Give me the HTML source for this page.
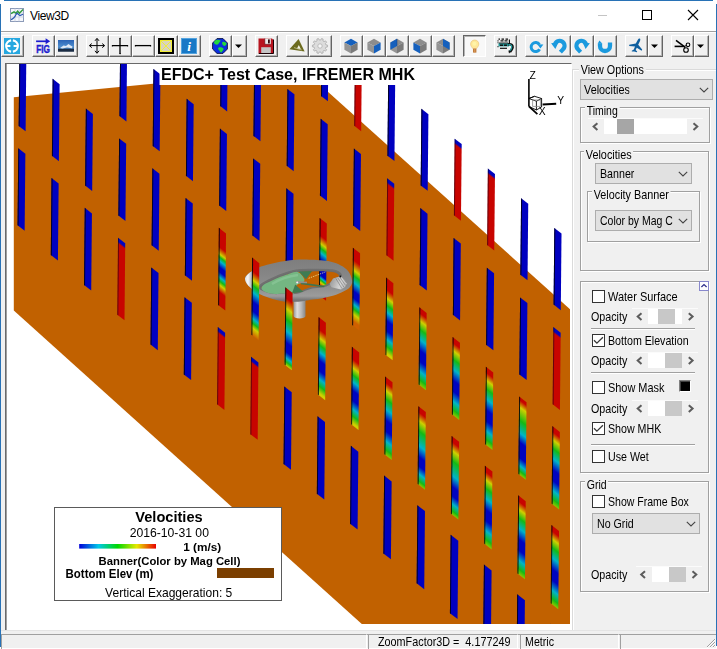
<!DOCTYPE html>
<html><head><meta charset="utf-8"><title>View3D</title>
<style>
html,body{margin:0;padding:0}
body{width:717px;height:649px;position:relative;overflow:hidden;background:#fff;font-family:"Liberation Sans",sans-serif;font-size:11px;color:#000}
.abs{position:absolute}
.face{position:absolute;left:1px;top:31px;width:715px;height:617px;background:#f0f0f0}
.tb{position:absolute;top:35px;height:20px;width:21px;border:1px solid;border-color:#fff #646464 #646464 #fff;background:#f0f0f0;box-sizing:content-box;box-shadow:inset -1px -1px 0 #b4b4b4}
.tb.dd{width:13px}
.tb svg{position:absolute;left:0;top:0}
.tb.pressed{border-color:#646464 #fff #fff #646464;background:#f8f8f8;box-shadow:inset 1px 1px 0 #b4b4b4}
.grp{position:absolute;border:1px solid #a0a0a0;box-shadow:1px 1px 0 #fff, inset 1px 1px 0 #fff;box-sizing:border-box}
.grp>span{position:absolute;top:-8px;left:6px;background:#f0f0f0;padding:0 1px;line-height:13px;white-space:nowrap}
.grp.lite{border-color:#dadada}
.lbl{position:absolute;white-space:nowrap;line-height:13px;letter-spacing:-0.15px}
.combo{position:absolute;box-sizing:border-box;border:1px solid #adadad;background:#e1e1e1;height:21px;line-height:18px;padding-left:4px;white-space:nowrap;overflow:hidden;letter-spacing:-0.15px}
.combo svg{position:absolute;right:3px;top:7px}
.cb{position:absolute;width:13px;height:13px;box-sizing:border-box;border:1px solid #333;background:#fff}
.cb svg{position:absolute;left:0;top:0}
.sep{position:absolute;height:1px;background:#a0a0a0;left:591px;width:104px;box-shadow:0 1px 0 #fff}
.t{position:absolute;white-space:nowrap;font-size:12.4px;line-height:14px;transform:scaleX(.86);filter:grayscale(1);transform-origin:0 0;color:#000}
.trk{position:absolute;background:#fff;height:15px}
.thm{position:absolute;height:15px}
.arw{position:absolute;font-size:0}
.sb{position:absolute;top:634px;height:14px;border:1px solid;border-color:#a0a0a0 #fff #fff #a0a0a0;box-sizing:content-box;line-height:14px;white-space:nowrap;padding-left:0;letter-spacing:-0.1px}
</style></head><body>
<!-- window frame -->
<div class="abs" style="left:4px;top:0;width:709px;height:1px;background:#2872b6;z-index:10"></div>
<div class="abs" style="left:0;top:4px;width:1px;height:643px;background:#2872b6;z-index:10"></div>
<div class="abs" style="left:716px;top:4px;width:1px;height:642px;background:#2872b6;z-index:10"></div>
<!-- title bar -->
<svg class="abs" style="left:10px;top:8px" width="14" height="14" viewBox="0 0 14 14">
 <rect x=".5" y=".5" width="13" height="13" fill="#f4f6fb" stroke="#8c9bb8"/>
 <path d="M.5 5H13.5M.5 9H13.5M5 .5V13.5M9 .5V13.5" stroke="#c5cde0" stroke-width=".8"/>
 <path d="M1 5.6L4 3.8L6 5.2L7.6 3.2L9.4 5.2L13 1.6" stroke="#2e9a3a" stroke-width="1.4" fill="none"/>
 <path d="M1 11.6C3.4 11 5 9 6 6.6L7 5.2L10 7.6L13 6.2" stroke="#2c58b0" stroke-width="1.2" fill="none"/>
</svg>
<div class="abs" style="left:30px;top:9px;font-size:12px;line-height:14px;letter-spacing:-0.38px">View3D</div>
<div class="abs" style="left:598px;top:15px;width:9px;height:1px;background:#c4c4c4"></div>
<div class="abs" style="left:642px;top:10px;width:8px;height:8px;border:1px solid #000"></div>
<svg class="abs" style="left:687px;top:9px" width="12" height="12" viewBox="0 0 12 12"><path d="M1 1L11 11M11 1L1 11" stroke="#000" stroke-width="1.1"/></svg>
<div class="face"></div>
<div class="abs" style="left:1px;top:31px;width:715px;height:1px;background:#a0a0a0"></div><div class="abs" style="left:1px;top:32px;width:715px;height:1px;background:#fff"></div>
<div class="tb" style="left:1px"><svg width="16" height="16" viewBox="0 0 16 16" style="left:2px;top:2px;overflow:visible"><rect width="16" height="16" fill="#27a8e0"/><path d="M7.1 2.35 A5.7 5.7 0 0 0 7.1 13.65 M8.9 2.35 A5.7 5.7 0 0 1 8.9 13.65" fill="none" stroke="#fff" stroke-width="2.1"/><path d="M2.6 8H6.4M9.6 8H13.4" stroke="#fff" stroke-width="2"/></svg></div>
<div class="tb" style="left:32px"><svg width="16" height="16" viewBox="0 0 16 16" style="left:2px;top:2px;overflow:visible"><path d="M1.1 3.3H12" stroke="#1c1ccf" stroke-width="1.7"/><path d="M15.2 3.3L10.6 .3V6.3Z" fill="#1c1ccf"/><text x="1.2" y="14.6" font-family="Liberation Sans, sans-serif" font-weight="bold" font-size="10.9" fill="#1c1ccf" stroke="#1c1ccf" stroke-width=".45" textLength="13.7" lengthAdjust="spacingAndGlyphs">FIG</text></svg></div>
<div class="tb" style="left:55px"><svg width="16" height="16" viewBox="0 0 16 16" style="left:2px;top:2px;overflow:visible"><defs><linearGradient id="sky" x1="0" y1="0" x2="0" y2="1"><stop offset="0" stop-color="#2b62b4"/><stop offset=".6" stop-color="#4f8fd0"/><stop offset="1" stop-color="#1c3048"/></linearGradient></defs><rect x="0" y="2" width="16" height="11.5" fill="url(#sky)"/><path d="M2 10 L5.5 7.4 L8 8 L10.5 6 L13 7.8 L14.5 8.6 L14 10.2 L9 9.6 L4.5 10.6Z" fill="#dfe8f4"/><rect x="0" y="11" width="16" height="2.5" fill="#1b2c44"/></svg></div>
<div class="tb" style="left:86px"><svg width="16" height="16" viewBox="0 0 16 16" style="left:2px;top:2px;overflow:visible"><path d="M8 1V15M1 7.6H15" stroke="#000" stroke-width="1"/><path d="M8 .3L6 2.8M8 .3L10 2.8M8 15.3L6 12.8M8 15.3L10 12.8M.3 7.6L2.8 5.6M.3 7.6L2.8 9.6M15.7 7.6L13.2 5.6M15.7 7.6L13.2 9.6" stroke="#000" stroke-width="1" fill="none"/></svg></div>
<div class="tb" style="left:109px"><svg width="16" height="16" viewBox="0 0 16 16" style="left:2px;top:2px;overflow:visible"><path d="M8 0V16M0 7.6H16" stroke="#000" stroke-width="1.3"/><path d="M7.4 .3H9M7.4 15.7H9M.3 7V8.6M15.7 7V8.6" stroke="#000" stroke-width=".7"/></svg></div>
<div class="tb" style="left:132px"><svg width="16" height="16" viewBox="0 0 16 16" style="left:2px;top:2px;overflow:visible"><path d="M0 7.6H16" stroke="#000" stroke-width="1.3"/><path d="M.3 7V8.6M15.7 7V8.6" stroke="#000" stroke-width=".7"/></svg></div>
<div class="tb" style="left:155px"><svg width="16" height="16" viewBox="0 0 16 16" style="left:2px;top:2px;overflow:visible"><rect x="1" y="1" width="14" height="14" fill="#d9d5bc" stroke="#000" stroke-width="2"/><rect x="2.5" y="2.5" width="11" height="11" fill="none" stroke="#f0ec38" stroke-width="1"/><path d="M3 3L13 13M13 3L3 13" stroke="#f0ec38" stroke-width="1"/></svg></div>
<div class="tb" style="left:178px"><svg width="16" height="16" viewBox="0 0 16 16" style="left:2px;top:2px;overflow:visible"><rect width="16" height="16" fill="#1878c6"/><rect x=".5" y=".5" width="15" height="15" fill="none" stroke="#7cc0ee" stroke-width="1" opacity=".6"/><text x="8.2" y="13" text-anchor="middle" font-family="Liberation Serif, serif" font-style="italic" font-weight="bold" font-size="13.5" fill="#fff">i</text></svg></div>
<div class="tb" style="left:209px"><svg width="16" height="16" viewBox="0 0 16 16" style="left:2px;top:2px;overflow:visible"><path d="M5 .6H11L15.4 5V11L11 15.4H5L.6 11V5Z" fill="#0a2ee0" stroke="#0a1040" stroke-width=".9"/><path d="M2.4 3.2 C4 1.6 7 1.4 8.6 2.6 C8.4 4.2 6.8 4.4 6.4 6 C5.2 7.4 3 6.6 2 5Z" fill="#22d83c"/><path d="M10.2 4.2 C11.6 3.2 13.6 4 14.6 5.6 C14.4 7.4 12.8 8.4 11.4 7.6 C10.4 6.8 9.8 5.4 10.2 4.2Z" fill="#22d83c"/><path d="M6.4 9.8 C8 8.8 10.6 9.4 11.6 10.8 C11.4 12.6 10.2 13.2 9.6 14.6 C8.4 14.8 7.8 13 7 12 C6.2 11.4 5.8 10.6 6.4 9.8Z" fill="#22d83c"/></svg></div>
<div class="tb dd" style="left:232px"><svg width="13" height="20" viewBox="0 0 13 20" style="left:0;top:0"><path d="M2 8.5H9L5.5 12Z" fill="#000"/></svg></div>
<div class="tb" style="left:255px"><svg width="16" height="16" viewBox="0 0 16 16" style="left:2px;top:2px;overflow:visible"><path d="M.5 .5H14L15.5 2V15.5H.5Z" fill="#b8141f"/><rect x="3.2" y="9.2" width="9.6" height="6.3" fill="#c4c4c4"/><rect x="6.8" y=".5" width="6" height="5.8" fill="#ececec"/><rect x="10" y="1.4" width="1.8" height="4" fill="#30080c"/><path d="M15.5 1.5V15.5H.8" fill="none" stroke="#1a0004" stroke-width="1"/><path d="M6.8 .5V6.3H12.8" fill="none" stroke="#5a0a10" stroke-width=".6"/></svg></div>
<div class="tb" style="left:286px"><svg width="16" height="16" viewBox="0 0 16 16" style="left:2px;top:2px;overflow:visible"><path d="M9.6 1 L15.6 13.6 L.4 11.2Z" fill="#6c6b1e"/><path d="M9.8 7 L11.8 11 L8 10.4Z" fill="#f4f4e8"/><path d="M5 9.6L12.8 12" stroke="#e0e0c0" stroke-width=".6"/></svg></div>
<div class="tb" style="left:309px"><svg width="16" height="16" viewBox="0 0 16 16" style="left:2px;top:2px;overflow:visible"><path d="M15.55 7.17L15.55 8.83L13.88 9.19L13.45 10.50L14.60 11.77L13.62 13.12L12.06 12.42L10.94 13.23L11.13 14.93L9.54 15.44L8.68 13.96L7.31 13.96L6.46 15.44L4.87 14.93L5.05 13.22L3.94 12.41L2.38 13.12L1.40 11.77L2.54 10.49L2.12 9.18L0.45 8.83L0.45 7.17L2.12 6.81L2.55 5.50L1.40 4.23L2.38 2.88L3.94 3.58L5.06 2.77L4.87 1.07L6.46 0.56L7.32 2.04L8.69 2.04L9.54 0.56L11.13 1.07L10.95 2.78L12.06 3.59L13.62 2.88L14.60 4.23L13.46 5.51L13.88 6.82Z" fill="#dcdcdc" stroke="#a8a8a8" stroke-width=".8"/><circle cx="8" cy="8" r="2.2" fill="#f6f6f6" stroke="#b0b0b0" stroke-width=".8"/></svg></div>
<div class="tb" style="left:340px"><svg width="16" height="16" viewBox="0 0 16 16" style="left:2px;top:2px;overflow:visible"><path d="M8 .8 L14.6 4.4 L8 8 L1.4 4.4Z" fill="#1560bd"/><path d="M1.4 4.4 L8 8 V15.4 L1.4 11.8Z" fill="#949494"/><path d="M14.6 4.4 L8 8 V15.4 L14.6 11.8Z" fill="#7a7a7a"/></svg></div>
<div class="tb" style="left:363px"><svg width="16" height="16" viewBox="0 0 16 16" style="left:2px;top:2px;overflow:visible"><path d="M8 .8 L14.6 4.4 L8 8 L1.4 4.4Z" fill="#8c8c8c"/><path d="M1.4 4.4 L8 8 V15.4 L1.4 11.8Z" fill="#949494"/><path d="M14.6 4.4 L8 8 V15.4 L14.6 11.8Z" fill="#1560bd"/></svg></div>
<div class="tb" style="left:386px"><svg width="16" height="16" viewBox="0 0 16 16" style="left:2px;top:2px;overflow:visible"><path d="M8 .8 L14.6 4.4 L8 8 L1.4 4.4Z" fill="#8c8c8c"/><path d="M1.4 4.4 L8 8 V15.4 L1.4 11.8Z" fill="#949494"/><path d="M14.6 4.4 L8 8 V15.4 L14.6 11.8Z" fill="#7a7a7a"/><path d="M8 .8 L1.4 4.4 V11.8 L8 8Z" fill="#1560bd"/><path d="M8 .8V8" stroke="#0d3f86" stroke-width=".5"/></svg></div>
<div class="tb" style="left:409px"><svg width="16" height="16" viewBox="0 0 16 16" style="left:2px;top:2px;overflow:visible"><path d="M8 .8 L14.6 4.4 L8 8 L1.4 4.4Z" fill="#8c8c8c"/><path d="M1.4 4.4 L8 8 V15.4 L1.4 11.8Z" fill="#1560bd"/><path d="M14.6 4.4 L8 8 V15.4 L14.6 11.8Z" fill="#7a7a7a"/></svg></div>
<div class="tb" style="left:432px"><svg width="16" height="16" viewBox="0 0 16 16" style="left:2px;top:2px;overflow:visible"><path d="M8 .8 L14.6 4.4 L8 8 L1.4 4.4Z" fill="#8c8c8c"/><path d="M1.4 4.4 L8 8 V15.4 L1.4 11.8Z" fill="#949494"/><path d="M14.6 4.4 L8 8 V15.4 L14.6 11.8Z" fill="#7a7a7a"/><path d="M8 .8 L14.6 4.4 V11.8 L8 8Z" fill="#1560bd"/></svg></div>
<div class="tb pressed" style="left:463px"><svg width="16" height="16" viewBox="0 0 16 16" style="left:2px;top:2px;overflow:visible"><path d="M8.7 2 C11.2 2 12.8 3.9 12.8 6.1 C12.8 8 11.4 9.2 10.6 10.6 H6.8 C6 9.2 4.6 8 4.6 6.1 C4.6 3.9 6.2 2 8.7 2Z" fill="#ffe898" stroke="#e8c070" stroke-width=".6"/><circle cx="8.4" cy="5.8" r="2" fill="#fff4a8"/><rect x="7" y="10.6" width="3.4" height="4" fill="#c07c3c"/><path d="M8.7 10.6V14.6" stroke="#e0a060" stroke-width=".8"/></svg></div>
<div class="tb" style="left:494px"><svg width="16" height="16" viewBox="0 0 16 16" style="left:2px;top:2px;overflow:visible"><path d="M1.5 1.1H3M4.5 1.1H7M8.5 1.1H11M.5 2.9H1.5M3.5 2.9H6.5M7.5 2.9H10.5M.5 4.8H1.5M.5 8.6H1.5" stroke="#111" stroke-width="1.1"/><rect x="1.5" y="5.2" width="10.5" height="3.2" fill="#1f9494"/><path d="M3 7.2H6M7 7.2H10" stroke="#111" stroke-width="1.5"/><path d="M2 5H11" stroke="#111" stroke-width=".9"/><path d="M3 10.3H10" stroke="#111" stroke-width="1.2"/><path d="M12.4 1.4V6" stroke="#111" stroke-width="1.2"/><path d="M11 6.4 C14.5 5.6 16 7.6 15.4 10 C15 11.6 14 12.8 13 14" fill="none" stroke="#111" stroke-width="2.6"/><path d="M11.4 6.6 C14.2 6.2 15.2 7.8 14.6 9.8 C14.2 11.2 13.6 12 12.8 13" fill="none" stroke="#27a6a6" stroke-width="1.2"/><path d="M11.4 12.4 L14.4 13 L12 15.6Z" fill="#111"/></svg></div>
<div class="tb" style="left:525px"><svg width="16" height="16" viewBox="0 0 16 16" style="left:2px;top:2px;overflow:visible"><path d="M11.4 6.6 A4.5 4.5 0 1 0 11.6 11.2" fill="none" stroke="#1b9ade" stroke-width="3"/><path d="M9.4 6.2 L15.4 6.4 L12.4 10.6Z" fill="#1b9ade"/></svg></div>
<div class="tb" style="left:548px"><svg width="16" height="16" viewBox="0 0 16 16" style="left:2px;top:2px;overflow:visible"><path d="M3.8 7.2 A4.9 4.9 0 1 1 11.9 11.4 L9.4 14.2" fill="none" stroke="#1b9ade" stroke-width="4.1"/><path d="M.1 5.2 L7.4 4.2 L4.4 11Z" fill="#1b9ade"/></svg></div>
<div class="tb" style="left:571px"><svg width="16" height="16" viewBox="0 0 16 16" style="left:2px;top:2px;overflow:visible"><path d="M12.2 7.2 A4.9 4.9 0 1 0 4.1 11.4 L6.6 14.2" fill="none" stroke="#1b9ade" stroke-width="4.1"/><path d="M15.9 5.2 L8.6 4.2 L11.6 11Z" fill="#1b9ade"/></svg></div>
<div class="tb" style="left:594px"><svg width="16" height="16" viewBox="0 0 16 16" style="left:2px;top:2px;overflow:visible"><path d="M3 5.2 V8 A5 5 0 0 0 13 8 V4.6" fill="none" stroke="#1b9ade" stroke-width="4.3"/><path d="M.8 5.4 L2.4 2.6 L5.2 5.4Z" fill="#1b9ade"/></svg></div>
<div class="tb" style="left:625px"><svg width="16" height="16" viewBox="0 0 16 16" style="left:2px;top:2px;overflow:visible"><path d="M11.6 .6 C12.6 .8 12.4 2 12 3 L10.2 6.8 L14.2 11.6 L13.6 12.8 L8.8 9.8 L7.6 12 L9.2 13.4 L8.8 14.2 L6.2 13.4 L3.8 13.6 L3.8 12.8 L5.8 11.6 L7 8.4 L1.2 8 L1.2 6.8 L7.8 5.6 L10 1.6 C10.4 .9 10.9 .5 11.6 .6Z" fill="#0f5f9f"/></svg></div>
<div class="tb dd" style="left:648px"><svg width="13" height="20" viewBox="0 0 13 20" style="left:0;top:0"><path d="M2 8.5H9L5.5 12Z" fill="#000"/></svg></div>
<div class="tb" style="left:671px"><svg width="16" height="16" viewBox="0 0 16 16" style="left:2px;top:2px;overflow:visible"><path d="M2 2.4 L10 8.4" stroke="#000" stroke-width="1.5"/><path d="M.6 8.4 H10" stroke="#000" stroke-width="1.6"/><path d="M10 8.4 L12.6 7.4 M10 8.4 L11 10" stroke="#000" stroke-width="1.1"/><circle cx="14" cy="6.8" r="1.8" fill="none" stroke="#000" stroke-width="1.1"/><circle cx="12" cy="12" r="2.3" fill="none" stroke="#000" stroke-width="1.1"/></svg></div>
<div class="tb dd" style="left:694px"><svg width="13" height="20" viewBox="0 0 13 20" style="left:0;top:0"><path d="M2 8.5H9L5.5 12Z" fill="#000"/></svg></div>
<div class="abs" style="left:5px;top:63px;width:565px;height:566px;background:#fff;border-top:1px solid #696969;border-left:1px solid #696969;border-right:1px solid #fff;border-bottom:1px solid #fff;box-sizing:content-box"></div>
<div class="abs" style="left:6px;top:64px;width:1px;height:566px;background:#a0a0a0"></div>
<svg width="717" height="649" viewBox="0 0 717 649" style="position:absolute;left:0;top:0">
<defs><linearGradient id="std" x1="0" y1="0" x2="0" y2="1"><stop offset="0" stop-color="#c80400"/><stop offset="0.07" stop-color="#c80400"/><stop offset="0.17" stop-color="#cfd000"/><stop offset="0.28" stop-color="#14ba14"/><stop offset="0.41" stop-color="#00b4c8"/><stop offset="0.55" stop-color="#0004c0"/><stop offset="0.69" stop-color="#0004c0"/><stop offset="0.82" stop-color="#00b4c8"/><stop offset="0.93" stop-color="#14ba14"/><stop offset="1" stop-color="#8cc800"/></linearGradient><linearGradient id="std2" x1="0" y1="0" x2="0" y2="1"><stop offset="0" stop-color="#c80400"/><stop offset="0.15" stop-color="#c80400"/><stop offset="0.26" stop-color="#cfd000"/><stop offset="0.35" stop-color="#14ba14"/><stop offset="0.44" stop-color="#00b4c8"/><stop offset="0.55" stop-color="#0004c0"/><stop offset="0.68" stop-color="#0004c0"/><stop offset="0.79" stop-color="#00b4c8"/><stop offset="0.88" stop-color="#14ba14"/><stop offset="0.97" stop-color="#cfd000"/><stop offset="1" stop-color="#cfd000"/></linearGradient><linearGradient id="g60" x1="0" y1="0" x2="0" y2="1"><stop offset="0" stop-color="#c80400"/><stop offset="0.24" stop-color="#c80400"/><stop offset="0.33" stop-color="#cfd000"/><stop offset="0.37" stop-color="#14ba14"/><stop offset="0.42" stop-color="#00b4c8"/><stop offset="0.5" stop-color="#0004c0"/><stop offset="0.56" stop-color="#0004c0"/><stop offset="0.63" stop-color="#00b4c8"/><stop offset="0.68" stop-color="#14ba14"/><stop offset="0.73" stop-color="#cfd000"/><stop offset="0.82" stop-color="#c80400"/><stop offset="1" stop-color="#c80400"/></linearGradient><linearGradient id="g70" x1="0" y1="0" x2="0" y2="1"><stop offset="0" stop-color="#c80400"/><stop offset="0.17" stop-color="#c80400"/><stop offset="0.28" stop-color="#cfd000"/><stop offset="0.35" stop-color="#14ba14"/><stop offset="0.44" stop-color="#00b4c8"/><stop offset="0.56" stop-color="#0004c0"/><stop offset="0.68" stop-color="#0004c0"/><stop offset="0.78" stop-color="#00b4c8"/><stop offset="0.84" stop-color="#14ba14"/><stop offset="0.9" stop-color="#cfd000"/><stop offset="1" stop-color="#d06000"/></linearGradient><linearGradient id="g80" x1="0" y1="0" x2="0" y2="1"><stop offset="0" stop-color="#c80400"/><stop offset="0.13" stop-color="#c80400"/><stop offset="0.26" stop-color="#cfd000"/><stop offset="0.4" stop-color="#14ba14"/><stop offset="0.55" stop-color="#00b4c8"/><stop offset="0.7" stop-color="#0004c0"/><stop offset="0.82" stop-color="#0004c0"/><stop offset="0.9" stop-color="#00b4c8"/><stop offset="0.95" stop-color="#14ba14"/><stop offset="1" stop-color="#cfd000"/></linearGradient><linearGradient id="g9m" x1="0" y1="0" x2="0" y2="1"><stop offset="0" stop-color="#c80400"/><stop offset="0.22" stop-color="#c80400"/><stop offset="0.32" stop-color="#cfd000"/><stop offset="0.38" stop-color="#14ba14"/><stop offset="0.44" stop-color="#00b4c8"/><stop offset="0.53" stop-color="#0004c0"/><stop offset="0.73" stop-color="#0004c0"/><stop offset="0.765" stop-color="#00b4c8"/><stop offset="0.79" stop-color="#14ba14"/><stop offset="0.82" stop-color="#cfd000"/><stop offset="0.85" stop-color="#d06000"/><stop offset="0.88" stop-color="#c80400"/><stop offset="1" stop-color="#c80400"/></linearGradient><linearGradient id="g10m" x1="0" y1="0" x2="0" y2="1"><stop offset="0" stop-color="#c80400"/><stop offset="0.15" stop-color="#c80400"/><stop offset="0.28" stop-color="#cfd000"/><stop offset="0.35" stop-color="#14ba14"/><stop offset="0.44" stop-color="#00b4c8"/><stop offset="0.55" stop-color="#0004c0"/><stop offset="0.64" stop-color="#0004c0"/><stop offset="0.72" stop-color="#00b4c8"/><stop offset="0.78" stop-color="#14ba14"/><stop offset="0.85" stop-color="#cfd000"/><stop offset="0.94" stop-color="#d06000"/><stop offset="1" stop-color="#d06000"/></linearGradient><linearGradient id="g15m" x1="0" y1="0" x2="0" y2="1"><stop offset="0" stop-color="#c80400"/><stop offset="0.04" stop-color="#c80400"/><stop offset="0.13" stop-color="#cfd000"/><stop offset="0.3" stop-color="#14ba14"/><stop offset="0.46" stop-color="#00b4c8"/><stop offset="0.58" stop-color="#0004c0"/><stop offset="0.78" stop-color="#0004c0"/><stop offset="0.88" stop-color="#00b4c8"/><stop offset="0.95" stop-color="#14ba14"/><stop offset="1" stop-color="#8cc800"/></linearGradient><linearGradient id="g12z" x1="0" y1="0" x2="0" y2="1"><stop offset="0" stop-color="#c80400"/><stop offset="0.07" stop-color="#c80400"/><stop offset="0.18" stop-color="#cfd000"/><stop offset="0.31" stop-color="#14ba14"/><stop offset="0.5" stop-color="#00b4c8"/><stop offset="0.64" stop-color="#0004c0"/><stop offset="0.76" stop-color="#0004c0"/><stop offset="0.86" stop-color="#00b4c8"/><stop offset="0.95" stop-color="#14ba14"/><stop offset="1" stop-color="#8cc800"/></linearGradient><linearGradient id="red" x1="0" y1="0" x2="0" y2="1"><stop offset="0" stop-color="#0004c0"/><stop offset="0.045" stop-color="#0004c0"/><stop offset="0.075" stop-color="#c80400"/><stop offset="1" stop-color="#c80400"/></linearGradient><clipPath id="vp"><rect x="7" y="64" width="563" height="560"/></clipPath></defs>
<g clip-path="url(#vp)">
<path d="M13.8 97.3 L302.8 69.3 L574 312.8 L574 624 L361.8 624 L13.8 310.5 Z" fill="#c16100"/>
<g transform="matrix(1 0.7757 -0.00950 1 286.39 188.18)"><rect width="7.12" height="77.07" fill="#0000c0"/><rect width="1" height="77.07" fill="#000018" opacity="0.92"/></g><g transform="matrix(1 0.7762 -0.00950 1 319.64 217.96)"><rect width="7.17" height="77.11" fill="url(#g9m)"/><rect width="1" height="77.11" fill="#080808" opacity="0.92"/></g>
<g><defs>
  <linearGradient id="ringg" gradientUnits="userSpaceOnUse" x1="0" y1="259" x2="0" y2="302"><stop offset="0" stop-color="#7e7e7e"/><stop offset=".3" stop-color="#848484"/><stop offset=".65" stop-color="#8e8e8e"/><stop offset=".86" stop-color="#9c9c9c"/><stop offset=".95" stop-color="#787878"/><stop offset="1" stop-color="#707070"/></linearGradient>
  <linearGradient id="cylg" x1="0" y1="0" x2="1" y2="0"><stop offset="0" stop-color="#969696"/><stop offset=".3" stop-color="#dedede"/><stop offset=".65" stop-color="#b8b8b8"/><stop offset="1" stop-color="#868686"/></linearGradient>
  <linearGradient id="hl" gradientUnits="userSpaceOnUse" x1="245" y1="0" x2="255" y2="0"><stop offset="0" stop-color="#dcdcdc"/><stop offset=".3" stop-color="#f8f8f8"/><stop offset=".65" stop-color="#b4b4b4"/><stop offset="1" stop-color="#888888"/></linearGradient>
  <linearGradient id="rp" gradientUnits="userSpaceOnUse" x1="331" y1="280" x2="347" y2="286"><stop offset="0" stop-color="#9c9c9c"/><stop offset=".6" stop-color="#d4d4d4"/><stop offset="1" stop-color="#b4b4b4"/></linearGradient>
 </defs><path d="M293.6 297 L293.6 316 A5.95 2.4 0 0 0 305.5 316 L305.5 297 Z" fill="url(#cylg)"/><path fill-rule="evenodd" fill="url(#ringg)" d="M245.0 278.3C244.8 276.5 246.0 276.1 247.0 275.0C248.0 273.9 248.6 273.4 250.9 272.0C253.2 270.6 257.2 268.1 261.0 266.6C264.8 265.1 269.2 264.2 273.5 263.2C277.8 262.2 282.5 261.3 286.9 260.7C291.3 260.1 294.3 259.6 300.0 259.5C305.7 259.4 315.5 259.8 321.1 260.3C326.7 260.8 330.1 261.3 333.7 262.4C337.3 263.4 340.2 264.8 342.9 266.6C345.5 268.4 348.1 270.7 349.6 273.2C351.1 275.7 352.1 279.2 352.1 281.6C352.1 284.0 351.1 285.8 349.6 287.5C348.1 289.2 345.5 290.4 342.9 291.7C340.2 293.0 336.9 294.4 333.7 295.4C330.5 296.4 327.1 297.2 323.6 297.9C320.1 298.6 315.9 299.1 312.7 299.6C309.5 300.1 307.2 300.5 304.4 300.9C301.6 301.2 299.2 301.6 296.0 301.7C292.8 301.8 288.9 302.1 285.2 301.7C281.4 301.3 277.7 300.4 273.5 299.2C269.3 297.9 264.2 296.4 260.0 294.2C255.8 292.0 250.9 288.4 248.4 285.8C245.9 283.2 245.2 280.1 245.0 278.3Z M259.2 287.5C258.4 286.2 260.6 285.1 262.0 284.0C263.4 282.9 264.6 282.3 267.6 280.8C270.6 279.3 275.5 276.6 280.2 274.9C284.9 273.1 290.6 271.2 296.0 270.3C301.4 269.4 307.1 269.6 312.7 269.5C318.3 269.4 325.3 269.5 329.5 269.9C333.7 270.2 335.9 270.6 337.8 271.6C339.8 272.7 341.8 274.9 341.2 276.2C340.6 277.5 335.9 278.2 334.0 279.5C332.1 280.8 331.5 282.8 329.5 284.0C327.5 285.2 324.9 286.2 322.0 286.8C319.1 287.4 315.0 287.0 312.0 287.6C309.0 288.2 306.5 289.6 304.0 290.5C301.5 291.4 299.7 292.5 297.0 293.0C294.3 293.5 290.5 293.3 288.0 293.3C285.5 293.3 283.9 292.8 281.8 292.8C279.7 292.8 277.6 293.5 275.1 293.3C272.6 293.1 269.5 292.7 266.8 291.7C264.1 290.7 260.0 288.8 259.2 287.5Z"/><path fill-rule="evenodd" fill="#6c6c6c" d="M259.2 287.5C258.4 286.2 260.6 285.1 262.0 284.0C263.4 282.9 264.6 282.3 267.6 280.8C270.6 279.3 275.5 276.6 280.2 274.9C284.9 273.1 290.6 271.2 296.0 270.3C301.4 269.4 307.1 269.6 312.7 269.5C318.3 269.4 325.3 269.5 329.5 269.9C333.7 270.2 335.9 270.6 337.8 271.6C339.8 272.7 341.8 274.9 341.2 276.2C340.6 277.5 335.9 278.2 334.0 279.5C332.1 280.8 331.5 282.8 329.5 284.0C327.5 285.2 324.9 286.2 322.0 286.8C319.1 287.4 315.0 287.0 312.0 287.6C309.0 288.2 306.5 289.6 304.0 290.5C301.5 291.4 299.7 292.5 297.0 293.0C294.3 293.5 290.5 293.3 288.0 293.3C285.5 293.3 283.9 292.8 281.8 292.8C279.7 292.8 277.6 293.5 275.1 293.3C272.6 293.1 269.5 292.7 266.8 291.7C264.1 290.7 260.0 288.8 259.2 287.5Z M261.5 288.0C261.1 287.0 263.2 286.4 264.5 285.5C265.8 284.6 266.8 283.9 269.5 282.5C272.2 281.1 276.6 278.7 281.0 277.0C285.4 275.3 290.7 273.2 296.0 272.3C301.3 271.4 307.1 271.5 312.7 271.4C318.3 271.3 325.5 271.5 329.5 271.8C333.5 272.1 334.9 272.4 336.5 273.2C338.1 274.0 339.4 275.6 339.0 276.6C338.6 277.7 335.6 278.3 334.0 279.5C332.4 280.7 331.5 282.8 329.5 284.0C327.5 285.2 324.9 286.2 322.0 286.8C319.1 287.4 315.0 287.0 312.0 287.6C309.0 288.2 306.5 289.6 304.0 290.5C301.5 291.4 299.7 292.5 297.0 293.0C294.3 293.5 290.5 293.3 288.0 293.3C285.5 293.3 283.9 292.8 281.8 292.8C279.7 292.8 277.6 293.5 275.1 293.3C272.6 293.1 269.1 292.6 266.8 291.7C264.5 290.8 261.9 289.0 261.5 288.0Z"/><path d="M259.2 287.5C258.4 286.2 260.6 285.1 262.0 284.0C263.4 282.9 264.6 282.3 267.6 280.8C270.6 279.3 275.5 276.6 280.2 274.9C284.9 273.1 290.6 271.2 296.0 270.3C301.4 269.4 307.1 269.6 312.7 269.5C318.3 269.4 325.3 269.5 329.5 269.9C333.7 270.2 335.9 270.6 337.8 271.6C339.8 272.7 341.8 274.9 341.2 276.2C340.6 277.5 335.9 278.2 334.0 279.5C332.1 280.8 331.5 282.8 329.5 284.0C327.5 285.2 324.9 286.2 322.0 286.8C319.1 287.4 315.0 287.0 312.0 287.6C309.0 288.2 306.5 289.6 304.0 290.5C301.5 291.4 299.7 292.5 297.0 293.0C294.3 293.5 290.5 293.3 288.0 293.3C285.5 293.3 283.9 292.8 281.8 292.8C279.7 292.8 277.6 293.5 275.1 293.3C272.6 293.1 269.5 292.7 266.8 291.7C264.1 290.7 260.0 288.8 259.2 287.5Z" fill="none" stroke="#707070" stroke-width="1.6"/><path d="M245 278.3 C246.5 275 249 273 252 271.3 L257 268.6 C255.5 276 255.5 284 258.5 293 C254 290.5 250.5 288 248.4 285.8 C246 283 244.8 280.5 245 278.3Z" fill="url(#hl)"/><path d="M262.4 288.3C262.2 287.1 263.8 285.8 265.6 284.6C267.4 283.4 269.5 282.5 273.0 281.0C276.5 279.5 282.4 277.0 286.5 275.6C290.6 274.2 294.7 272.0 297.5 272.8C300.3 273.6 303.8 278.6 303.5 280.5C303.2 282.4 297.8 282.4 296.0 284.5C294.2 286.6 294.3 291.4 293.0 292.8C291.7 294.2 289.9 293.2 288.0 293.2C286.1 293.2 283.9 292.6 281.8 292.6C279.7 292.6 277.6 293.4 275.1 293.2C272.6 293.0 268.9 292.4 266.8 291.6C264.7 290.8 262.6 289.5 262.4 288.3Z" fill="#74b682" stroke="#74b682" stroke-width="1.8" stroke-linejoin="round"/><path d="M272 284 C280 279 290 276 298 275" stroke="#8cc898" stroke-width="2.5" fill="none" opacity=".7"/><path d="M298.8 271.4 L312 270.9 L306 279.2 Z" fill="#3e7c54"/><path d="M295.2 284.4 L303.2 291.8 L292 293.2 Z" fill="#3e7c54"/><path d="M301 282.6 L324.5 285.8 L324.2 287.2 L301 284.2 Z" fill="#3f7450"/><path d="M296 281 L307 281.8 L307 283.2 L296 283 Z" fill="#909090"/><circle cx="297.2" cy="282.6" r="1" fill="#f4f4f4"/><path d="M308.6 278.3 L325.3 272" stroke="#e8e4a0" stroke-width=".8" stroke-dasharray="1.4 1"/><path d="M333 278.6 L341.2 276 L347.2 283 L345 287 L341 289.6 L331.5 287.2 L329.5 284 Z" fill="url(#rp)"/><path d="M341.6 276.6 L346.8 283 M339.8 277.2 L345.6 285.4 M337.8 277.8 L344 287.2 M335.8 278.4 L342 288.6" stroke="#6c6c6c" stroke-width=".7" opacity=".75"/><circle cx="340.4" cy="276.6" r="1" fill="#111"/></g>
<g transform="matrix(1 0.7729 -0.00950 1 321.74 19.33)"><rect width="6.89" height="76.68" fill="#0000c0"/><rect width="1" height="76.68" fill="#000018" opacity="0.92"/></g><g transform="matrix(1 0.7731 -0.00950 1 221.00 29.19)"><rect width="6.90" height="76.93" fill="#0000c0"/><rect width="1" height="76.93" fill="#000018" opacity="0.92"/></g><g transform="matrix(1 0.7733 -0.00950 1 120.23 39.04)"><rect width="6.91" height="77.04" fill="#0000c0"/><rect width="1" height="77.04" fill="#000018" opacity="0.92"/></g><g transform="matrix(1 0.7734 -0.00950 1 19.42 48.89)"><rect width="6.93" height="77.01" fill="#0000c0"/><rect width="1" height="77.01" fill="#000018" opacity="0.92"/></g><g transform="matrix(1 0.7734 -0.00950 1 354.96 49.18)"><rect width="6.93" height="76.64" fill="url(#red)"/><rect width="1" height="76.64" fill="#000018" opacity="0.5"/></g><g transform="matrix(1 0.7736 -0.00950 1 254.23 59.04)"><rect width="6.94" height="76.90" fill="#0000c0"/><rect width="1" height="76.90" fill="#000018" opacity="0.92"/></g><g transform="matrix(1 0.7738 -0.00950 1 153.46 68.90)"><rect width="6.96" height="77.02" fill="#0000c0"/><rect width="1" height="77.02" fill="#000018" opacity="0.92"/></g><g transform="matrix(1 0.7739 -0.00950 1 52.65 78.74)"><rect width="6.97" height="77.01" fill="#0000c0"/><rect width="1" height="77.01" fill="#000018" opacity="0.92"/></g><g transform="matrix(1 0.7739 -0.00950 1 388.19 79.02)"><rect width="6.97" height="76.61" fill="#0000c0"/><rect width="1" height="76.61" fill="#000018" opacity="0.92"/></g><g transform="matrix(1 0.7741 -0.00950 1 287.45 88.88)"><rect width="6.98" height="76.88" fill="#0000c0"/><rect width="1" height="76.88" fill="#000018" opacity="0.92"/></g><g transform="matrix(1 0.7743 -0.00950 1 186.69 98.74)"><rect width="7.00" height="77.02" fill="#0000c0"/><rect width="1" height="77.02" fill="#000018" opacity="0.92"/></g><g transform="matrix(1 0.7744 -0.00950 1 85.89 108.59)"><rect width="7.01" height="77.02" fill="#0000c0"/><rect width="1" height="77.02" fill="#000018" opacity="0.92"/></g><g transform="matrix(1 0.7744 -0.00950 1 421.41 108.84)"><rect width="7.01" height="76.59" fill="#0000c0"/><rect width="1" height="76.59" fill="#000018" opacity="0.92"/></g><g transform="matrix(1 0.7746 -0.00950 1 320.68 118.71)"><rect width="7.03" height="76.87" fill="#0000c0"/><rect width="1" height="76.87" fill="#000018" opacity="0.92"/></g><g transform="matrix(1 0.7748 -0.00950 1 219.92 128.56)"><rect width="7.04" height="77.02" fill="#0000c0"/><rect width="1" height="77.02" fill="#000018" opacity="0.92"/></g><g transform="matrix(1 0.7749 -0.00950 1 119.13 138.41)"><rect width="7.05" height="77.04" fill="#0000c0"/><rect width="1" height="77.04" fill="#000018" opacity="0.92"/></g><g transform="matrix(1 0.7749 -0.00950 1 454.64 138.65)"><rect width="7.05" height="76.58" fill="url(#red)"/><rect width="1" height="76.58" fill="#000018" opacity="0.5"/></g><g transform="matrix(1 0.7751 -0.00950 1 18.30 148.26)"><rect width="7.07" height="76.91" fill="#0000c0"/><rect width="1" height="76.91" fill="#000018" opacity="0.92"/></g><g transform="matrix(1 0.7751 -0.00950 1 353.91 148.52)"><rect width="7.07" height="76.88" fill="#0000c0"/><rect width="1" height="76.88" fill="#000018" opacity="0.92"/></g><g transform="matrix(1 0.7752 -0.00950 1 253.16 158.38)"><rect width="7.08" height="77.04" fill="#0000c0"/><rect width="1" height="77.04" fill="#000018" opacity="0.92"/></g><g transform="matrix(1 0.7754 -0.00950 1 152.37 168.23)"><rect width="7.10" height="77.07" fill="#0000c0"/><rect width="1" height="77.07" fill="#000018" opacity="0.92"/></g><g transform="matrix(1 0.7754 -0.00950 1 487.87 168.45)"><rect width="7.10" height="76.58" fill="url(#red)"/><rect width="1" height="76.58" fill="#000018" opacity="0.5"/></g><g transform="matrix(1 0.7756 -0.00950 1 51.54 178.07)"><rect width="7.11" height="76.95" fill="#0000c0"/><rect width="1" height="76.95" fill="#000018" opacity="0.92"/></g><g transform="matrix(1 0.7756 -0.00950 1 387.15 178.32)"><rect width="7.11" height="76.89" fill="url(#red)"/><rect width="1" height="76.89" fill="#000018" opacity="0.5"/></g><g transform="matrix(1 0.7759 -0.00950 1 185.61 198.03)"><rect width="7.14" height="77.11" fill="#0000c0"/><rect width="1" height="77.11" fill="#000018" opacity="0.92"/></g><g transform="matrix(1 0.7759 -0.00950 1 521.10 198.24)"><rect width="7.14" height="76.59" fill="#0000c0"/><rect width="1" height="76.59" fill="#000018" opacity="0.92"/></g><g transform="matrix(1 0.7760 -0.00950 1 84.79 207.87)"><rect width="7.15" height="77.01" fill="#0000c0"/><rect width="1" height="77.01" fill="#000018" opacity="0.92"/></g><g transform="matrix(1 0.7760 -0.00950 1 420.38 208.11)"><rect width="7.15" height="76.92" fill="#0000c0"/><rect width="1" height="76.92" fill="#000018" opacity="0.92"/></g><g transform="matrix(1 0.7764 -0.00950 1 218.85 227.82)"><rect width="7.18" height="77.16" fill="url(#g60)"/><rect width="1" height="77.16" fill="#080808" opacity="0.92"/></g><g transform="matrix(1 0.7764 -0.00950 1 554.33 228.01)"><rect width="7.18" height="76.61" fill="#0000c0"/><rect width="1" height="76.61" fill="#000018" opacity="0.92"/></g><g transform="matrix(1 0.7765 -0.00950 1 118.04 237.66)"><rect width="7.19" height="77.07" fill="url(#red)"/><rect width="1" height="77.07" fill="#000018" opacity="0.5"/></g><g transform="matrix(1 0.7765 -0.00950 1 453.62 237.88)"><rect width="7.19" height="76.95" fill="#0000c0"/><rect width="1" height="76.95" fill="#000018" opacity="0.92"/></g><g transform="matrix(1 0.7767 -0.00950 1 352.88 247.74)"><rect width="7.21" height="77.16" fill="url(#g10m)"/><rect width="1" height="77.16" fill="#080808" opacity="0.92"/></g><g transform="matrix(1 0.7768 -0.00950 1 252.10 257.59)"><rect width="7.22" height="77.22" fill="url(#g70)"/><rect width="1" height="77.22" fill="#080808" opacity="0.92"/></g><g transform="matrix(1 0.7770 -0.00950 1 151.29 267.44)"><rect width="7.23" height="77.15" fill="#0000c0"/><rect width="1" height="77.15" fill="#000018" opacity="0.92"/></g><g transform="matrix(1 0.7770 -0.00950 1 486.86 267.64)"><rect width="7.23" height="77.00" fill="#0000c0"/><rect width="1" height="77.00" fill="#000018" opacity="0.92"/></g><g transform="matrix(1 0.7771 -0.00950 1 386.12 277.50)"><rect width="7.25" height="77.22" fill="url(#std2)"/><rect width="1" height="77.22" fill="#080808" opacity="0.92"/></g><g transform="matrix(1 0.7773 -0.00950 1 285.35 287.36)"><rect width="7.26" height="77.29" fill="url(#g80)"/><rect width="1" height="77.29" fill="#080808" opacity="0.92"/></g><g transform="matrix(1 0.7774 -0.00950 1 184.55 297.20)"><rect width="7.28" height="77.23" fill="#0000c0"/><rect width="1" height="77.23" fill="#000018" opacity="0.92"/></g><g transform="matrix(1 0.7774 -0.00950 1 520.11 297.39)"><rect width="7.28" height="77.06" fill="#0000c0"/><rect width="1" height="77.06" fill="#000018" opacity="0.92"/></g><g transform="matrix(1 0.7776 -0.00950 1 419.37 307.25)"><rect width="7.29" height="77.29" fill="url(#std)"/><rect width="1" height="77.29" fill="#080808" opacity="0.92"/></g><g transform="matrix(1 0.7777 -0.00950 1 318.61 317.11)"><rect width="7.30" height="77.38" fill="url(#std2)"/><rect width="1" height="77.38" fill="#080808" opacity="0.92"/></g><g transform="matrix(1 0.7779 -0.00950 1 217.81 326.95)"><rect width="7.32" height="77.33" fill="url(#red)"/><rect width="1" height="77.33" fill="#000018" opacity="0.5"/></g><g transform="matrix(1 0.7779 -0.00950 1 553.35 327.12)"><rect width="7.32" height="77.13" fill="url(#red)"/><rect width="1" height="77.13" fill="#000018" opacity="0.5"/></g><g transform="matrix(1 0.7780 -0.00950 1 452.62 336.99)"><rect width="7.33" height="77.37" fill="url(#std)"/><rect width="1" height="77.37" fill="#080808" opacity="0.92"/></g><g transform="matrix(1 0.7782 -0.00950 1 351.86 346.84)"><rect width="7.35" height="77.47" fill="url(#std2)"/><rect width="1" height="77.47" fill="#080808" opacity="0.92"/></g><g transform="matrix(1 0.7783 -0.00950 1 251.07 356.69)"><rect width="7.36" height="77.44" fill="url(#red)"/><rect width="1" height="77.44" fill="#000018" opacity="0.5"/></g><g transform="matrix(1 0.7785 -0.00950 1 485.88 366.71)"><rect width="7.37" height="77.46" fill="url(#std)"/><rect width="1" height="77.46" fill="#080808" opacity="0.92"/></g><g transform="matrix(1 0.7786 -0.00950 1 385.12 376.57)"><rect width="7.39" height="77.58" fill="url(#std)"/><rect width="1" height="77.58" fill="#080808" opacity="0.92"/></g><g transform="matrix(1 0.7788 -0.00950 1 284.33 386.42)"><rect width="7.40" height="77.56" fill="#0000c0"/><rect width="1" height="77.56" fill="#000018" opacity="0.92"/></g><g transform="matrix(1 0.7789 -0.00950 1 519.13 396.42)"><rect width="7.41" height="77.56" fill="url(#g15m)"/><rect width="1" height="77.56" fill="#080808" opacity="0.92"/></g><g transform="matrix(1 0.7791 -0.00950 1 418.38 406.28)"><rect width="7.43" height="77.69" fill="url(#g12z)"/><rect width="1" height="77.69" fill="#080808" opacity="0.92"/></g><g transform="matrix(1 0.7792 -0.00950 1 317.59 416.13)"><rect width="7.44" height="77.69" fill="#0000c0"/><rect width="1" height="77.69" fill="#000018" opacity="0.92"/></g><g transform="matrix(1 0.7794 -0.00950 1 552.39 426.12)"><rect width="7.46" height="77.68" fill="url(#std)"/><rect width="1" height="77.68" fill="#080808" opacity="0.92"/></g><g transform="matrix(1 0.7795 -0.00950 1 451.64 435.98)"><rect width="7.47" height="77.82" fill="url(#g12z)"/><rect width="1" height="77.82" fill="#080808" opacity="0.92"/></g><g transform="matrix(1 0.7796 -0.00950 1 350.86 445.83)"><rect width="7.48" height="77.83" fill="#0000c0"/><rect width="1" height="77.83" fill="#000018" opacity="0.92"/></g><g transform="matrix(1 0.7799 -0.00950 1 484.91 465.66)"><rect width="7.51" height="77.96" fill="url(#std)"/><rect width="1" height="77.96" fill="#080808" opacity="0.92"/></g><g transform="matrix(1 0.7801 -0.00950 1 384.13 475.51)"><rect width="7.53" height="77.98" fill="#0000c0"/><rect width="1" height="77.98" fill="#000018" opacity="0.92"/></g><g transform="matrix(1 0.7804 -0.00950 1 518.17 495.33)"><rect width="7.55" height="78.11" fill="url(#std)"/><rect width="1" height="78.11" fill="#080808" opacity="0.92"/></g><g transform="matrix(1 0.7805 -0.00950 1 417.40 505.19)"><rect width="7.57" height="78.14" fill="#0000c0"/><rect width="1" height="78.14" fill="#000018" opacity="0.92"/></g><g transform="matrix(1 0.7808 -0.00950 1 551.44 524.99)"><rect width="7.59" height="78.27" fill="url(#std)"/><rect width="1" height="78.27" fill="#080808" opacity="0.92"/></g><g transform="matrix(1 0.7809 -0.00950 1 450.68 534.85)"><rect width="7.61" height="78.31" fill="#0000c0"/><rect width="1" height="78.31" fill="#000018" opacity="0.92"/></g><g transform="matrix(1 0.7813 -0.00950 1 483.95 564.49)"><rect width="7.65" height="78.49" fill="#0000c0"/><rect width="1" height="78.49" fill="#000018" opacity="0.92"/></g><g transform="matrix(1 0.7817 -0.00950 1 517.23 594.13)"><rect width="7.69" height="78.69" fill="#0000c0"/><rect width="1" height="78.69" fill="#000018" opacity="0.92"/></g><g transform="matrix(1 0.7821 -0.00950 1 550.52 623.75)"><rect width="7.73" height="78.89" fill="#0000c0"/><rect width="1" height="78.89" fill="#000018" opacity="0.92"/></g>

<rect x="159.5" y="64" width="258" height="21" fill="#fff"/>
<text x="288" y="79.5" text-anchor="middle" font-family="Liberation Sans, sans-serif" font-size="16.05" font-weight="bold" fill="#000" style="filter:grayscale(1)">EFDC+ Test Case, IFREMER MHK</text>


<g stroke="#000" fill="none">
 <path d="M528.9 79 V106.4" stroke-width="1.6"/>
 <path d="M528.9 106.4 L537.4 114.2" stroke-width="1.8"/>
 <path d="M542.6 104.6 L556.2 103.8" stroke-width="2"/>
 <path d="M528.9 98.5 L534.5 96.3 L541.6 98.5 V107 L536.4 110 L528.9 106.4 M534.5 96.3 L528.9 98.5 M536.4 101.2 V110 M536.4 101.2 L541.6 98.5 M536.4 101.2 L528.9 98.5" stroke-width=".9"/>
 <path d="M532.6 100 H540.4 V106.4 H532.6 Z" stroke="#8a8a8a" stroke-width=".8"/>
</g>
<g font-family="Liberation Sans, sans-serif" font-size="10.3" fill="#000" style="filter:grayscale(1)">
 <text x="529.5" y="78.7">Z</text><text x="557.2" y="103.7">Y</text><text x="538.8" y="114.6">X</text>
</g>


<rect x="54.5" y="507.5" width="227" height="93" fill="#fff" stroke="#5a5a5a" stroke-width="1"/>
<defs><linearGradient id="cb" x1="0" y1="0" x2="1" y2="0"><stop offset="0" stop-color="#0000d8"/><stop offset=".25" stop-color="#00c8e8"/><stop offset=".5" stop-color="#00d800"/><stop offset=".75" stop-color="#e8e800"/><stop offset="1" stop-color="#e80000"/></linearGradient></defs>
<g font-family="Liberation Sans, sans-serif" fill="#000" text-anchor="middle" style="filter:grayscale(1)">
 <text x="169" y="522.3" font-size="14.6" font-weight="bold">Velocities</text>
 <text x="169.3" y="536.8" font-size="12.2">2016-10-31 00</text>
 <text x="202.2" y="551" font-size="11.8" font-weight="bold">1 (m/s)</text>
 <text x="169.5" y="565.1" font-size="11.3" font-weight="bold">Banner(Color by Mag Cell)</text>
 <text x="65.6" y="577.6" font-size="12.4" font-weight="bold" text-anchor="start" textLength="87.8" lengthAdjust="spacingAndGlyphs">Bottom Elev (m)</text>
 <text x="168.7" y="596.5" font-size="12.05">Vertical Exaggeration: 5</text>
</g>
<rect x="79.2" y="544" width="76.8" height="4.6" fill="url(#cb)"/>
<rect x="217" y="568" width="57" height="10" fill="#7b3f00"/>

</g>
</svg><div class="grp lite" style="left:572px;top:69px;width:160px;height:563px"></div>
<div class="t" style="left:581px;top:62.7px;transform:scaleX(0.868);background:#f0f0f0;padding:0 2px 0 2px;margin-left:-2px;">View Options</div>
<div class="combo" style="left:580px;top:79px;width:133px"><svg width="10" height="6" viewBox="0 0 10 6"><path d="M.8 .8L5 5L9.2 .8" fill="none" stroke="#444" stroke-width="1.1"/></svg></div><div class="t" style="left:584px;top:82.7px;transform:scaleX(0.876);max-width:130px;overflow:hidden;">Velocities</div>
<div class="grp" style="left:580px;top:107px;width:130px;height:36px"></div>
<div class="t" style="left:587px;top:103.7px;transform:scaleX(0.846);background:#f0f0f0;padding:0 2px 0 2px;margin-left:-2px;">Timing</div>
<div class="abs" style="left:588.2px;top:118px;width:114.5px;height:1px;background:#fbfbfb"></div><div class="trk" style="left:604px;top:119px;width:83px"></div><div class="thm" style="left:617px;top:119px;width:17px;background:#a6a6a6"></div><svg class="abs" style="left:0;top:0;overflow:visible" width="1" height="1"><path d="M597.4000000000001 123.19999999999999L593.6 126.6L597.4000000000001 130.0" fill="none" stroke="#5c5c5c" stroke-width="2"/><path d="M693.5 123.19999999999999L697.3000000000001 126.6L693.5 130.0" fill="none" stroke="#5c5c5c" stroke-width="2"/></svg>
<div class="grp" style="left:580px;top:151px;width:129px;height:120px"></div>
<div class="t" style="left:586.2px;top:147.7px;transform:scaleX(0.876);background:#f0f0f0;padding:0 2px 0 2px;margin-left:-2px;">Velocities</div>
<div class="combo" style="left:595px;top:163px;width:97px"><svg width="10" height="6" viewBox="0 0 10 6"><path d="M.8 .8L5 5L9.2 .8" fill="none" stroke="#444" stroke-width="1.1"/></svg></div><div class="t" style="left:599.6px;top:166.7px;transform:scaleX(0.860);max-width:88px;overflow:hidden;">Banner</div>
<div class="grp" style="left:587px;top:191px;width:113px;height:51px"></div>
<div class="t" style="left:594px;top:187.7px;transform:scaleX(0.872);background:#f0f0f0;padding:0 2px 0 2px;margin-left:-2px;">Velocity Banner</div>
<div class="combo" style="left:595px;top:210px;width:97px"><svg width="10" height="6" viewBox="0 0 10 6"><path d="M.8 .8L5 5L9.2 .8" fill="none" stroke="#444" stroke-width="1.1"/></svg></div><div class="t" style="left:599.6px;top:213.7px;transform:scaleX(0.846);max-width:88px;overflow:hidden;">Color by Mag C</div>
<div class="grp" style="left:580px;top:281px;width:129px;height:192px"></div>
<div class="abs" style="left:699px;top:281px;width:8px;height:8px;border:1px solid #8888cc;background:#fff"><svg class="abs" style="left:0;top:0" width="8" height="8" viewBox="0 0 8 8"><path d="M1.4 5L4 2.6L6.6 5" fill="none" stroke="#30308c" stroke-width="1.3"/></svg></div>
<div class="cb" style="left:592px;top:290px"></div><div class="t" style="left:608.4px;top:289.7px;transform:scaleX(0.885);">Water Surface</div>
<div class="t" style="left:590.9px;top:309.7px;transform:scaleX(0.863);">Opacity</div>
<div class="abs" style="left:632.3px;top:308px;width:65.70000000000005px;height:1px;background:#fbfbfb"></div><div class="trk" style="left:648px;top:309px;width:34px"></div><div class="thm" style="left:658px;top:309px;width:17px;background:#c8c8c8"></div><svg class="abs" style="left:0;top:0;overflow:visible" width="1" height="1"><path d="M641.5 313.20000000000005L637.6999999999999 316.6L641.5 320.0" fill="none" stroke="#5c5c5c" stroke-width="2"/><path d="M688.8 313.20000000000005L692.6 316.6L688.8 320.0" fill="none" stroke="#5c5c5c" stroke-width="2"/></svg>
<div class="sep" style="top:328px"></div>
<div class="cb" style="left:592px;top:334px"><svg width="11" height="11" viewBox="0 0 11 11"><path d="M1 5.3L3.9 8.2L9.9 2.2" fill="none" stroke="#383838" stroke-width="1.3"/></svg></div><div class="t" style="left:608.4px;top:333.7px;transform:scaleX(0.860);">Bottom Elevation</div>
<div class="t" style="left:590.9px;top:353.7px;transform:scaleX(0.863);">Opacity</div>
<div class="abs" style="left:632.3px;top:352px;width:65.70000000000005px;height:1px;background:#fbfbfb"></div><div class="trk" style="left:648px;top:353px;width:34px"></div><div class="thm" style="left:665px;top:353px;width:17px;background:#c8c8c8"></div><svg class="abs" style="left:0;top:0;overflow:visible" width="1" height="1"><path d="M641.5 357.20000000000005L637.6999999999999 360.6L641.5 364.0" fill="none" stroke="#5c5c5c" stroke-width="2"/><path d="M688.8 357.20000000000005L692.6 360.6L688.8 364.0" fill="none" stroke="#5c5c5c" stroke-width="2"/></svg>
<div class="sep" style="top:372px"></div>
<div class="cb" style="left:592px;top:381px"></div><div class="t" style="left:608.4px;top:380.7px;transform:scaleX(0.882);">Show Mask</div>
<div class="abs" style="left:679px;top:380px;width:10px;height:10px;border:1px solid;border-color:#808080 #fff #fff #808080;background:#000;box-shadow:inset 1px 1px 0 #404040"></div>
<div class="t" style="left:590.9px;top:401.7px;transform:scaleX(0.863);">Opacity</div>
<div class="abs" style="left:632.3px;top:400px;width:65.70000000000005px;height:1px;background:#fbfbfb"></div><div class="trk" style="left:648px;top:401px;width:34px"></div><div class="thm" style="left:665px;top:401px;width:17px;background:#c8c8c8"></div><svg class="abs" style="left:0;top:0;overflow:visible" width="1" height="1"><path d="M641.5 405.20000000000005L637.6999999999999 408.6L641.5 412.0" fill="none" stroke="#5c5c5c" stroke-width="2"/><path d="M688.8 405.20000000000005L692.6 408.6L688.8 412.0" fill="none" stroke="#5c5c5c" stroke-width="2"/></svg>
<div class="cb" style="left:592px;top:422px"><svg width="11" height="11" viewBox="0 0 11 11"><path d="M1 5.3L3.9 8.2L9.9 2.2" fill="none" stroke="#383838" stroke-width="1.3"/></svg></div><div class="t" style="left:608.4px;top:421.7px;transform:scaleX(0.860);">Show MHK</div>
<div class="sep" style="top:444px"></div>
<div class="cb" style="left:592px;top:450px"></div><div class="t" style="left:608.4px;top:449.7px;transform:scaleX(0.860);">Use Wet</div>
<div class="grp" style="left:580px;top:481px;width:129px;height:111px"></div>
<div class="t" style="left:586.6px;top:477.7px;transform:scaleX(0.849);background:#f0f0f0;padding:0 2px 0 2px;margin-left:-2px;">Grid</div>
<div class="cb" style="left:592px;top:495px"></div><div class="t" style="left:608.4px;top:494.7px;transform:scaleX(0.850);">Show Frame Box</div>
<div class="combo" style="left:592px;top:513px;width:108px"><svg width="10" height="6" viewBox="0 0 10 6"><path d="M.8 .8L5 5L9.2 .8" fill="none" stroke="#444" stroke-width="1.1"/></svg></div><div class="t" style="left:596.8px;top:516.7px;transform:scaleX(0.860);max-width:100px;overflow:hidden;">No Grid</div>
<div class="t" style="left:590.9px;top:567.7px;transform:scaleX(0.863);">Opacity</div>
<div class="abs" style="left:635.8px;top:566px;width:65.90000000000009px;height:1px;background:#fbfbfb"></div><div class="trk" style="left:652px;top:567px;width:34px"></div><div class="thm" style="left:669px;top:567px;width:17px;background:#c8c8c8"></div><svg class="abs" style="left:0;top:0;overflow:visible" width="1" height="1"><path d="M645.0 571.2L641.1999999999999 574.6L645.0 578.0" fill="none" stroke="#5c5c5c" stroke-width="2"/><path d="M692.5 571.2L696.3000000000001 574.6L692.5 578.0" fill="none" stroke="#5c5c5c" stroke-width="2"/></svg>
<div class="abs" style="left:1px;top:630px;width:715px;height:1px;background:#e4e4e4"></div>
<div class="abs" style="left:1px;top:631px;width:715px;height:17px;background:#f0f0f0"></div>
<div class="abs" style="left:1px;top:634px;width:714px;height:1px;background:#a0a0a0"></div>
<div class="sb" style="left:1px;width:364px"></div>
<div class="sb" style="left:368px;width:148px"></div>
<div class="sb" style="left:520px;width:97px"></div>
<div class="sb" style="left:620px;width:97px"></div>
<div class="t" style="left:377.9px;top:634.7px;transform:scaleX(0.872);">ZoomFactor3D =&nbsp; 4.177249</div>
<div class="t" style="left:524.7px;top:634.7px;transform:scaleX(0.860);">Metric</div>
<svg class="abs" style="left:704px;top:636px" width="12" height="12" viewBox="0 0 12 12"><path d="M11 3L3 11M11 6L6 11M11 9L9 11" stroke="#a0a0a0" stroke-width="1"/><path d="M12 3L3 12M12 6L6 12M12 9L9 12" stroke="#fff" stroke-width=".8"/></svg>
</body></html>
